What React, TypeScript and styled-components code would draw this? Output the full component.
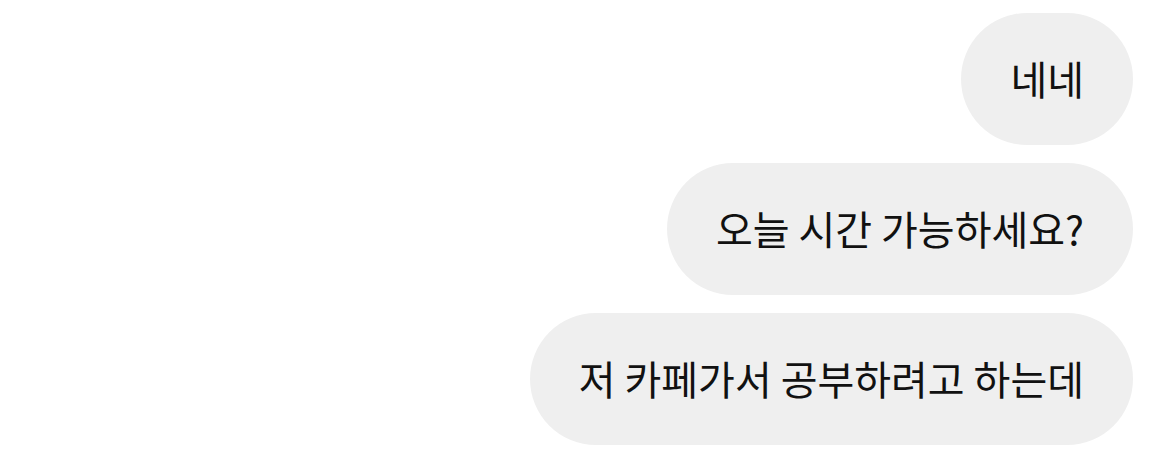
import React from 'react';
import styled, { createGlobalStyle } from 'styled-components';

const GlobalStyle = createGlobalStyle`
  html, body {
    margin: 0;
    padding: 0;
    background: #ffffff;
  }
  body {
    font-family: "Noto Sans CJK KR", "Noto Sans", sans-serif;
  }
`;

const Thread = styled.div`
  display: flex;
  flex-direction: column;
  align-items: flex-end;
  gap: 18px;
  padding: 13px 37px 0 0;
`;

const Bubble = styled.div`
  display: flex;
  align-items: center;
  height: 132px;
  padding: 0 49px 2px 49px;
  box-sizing: border-box;
  border-radius: 66px;
  background: #efefef;
  color: #111111;
  font-size: 40px;
  white-space: nowrap;
`;

const messages = ['네네', '오늘 시간 가능하세요?', '저 카페가서 공부하려고 하는데'];

const App: React.FC = () => (
  <>
    <GlobalStyle />
    <Thread>
      {messages.map((m) => (
        <Bubble key={m}>{m}</Bubble>
      ))}
    </Thread>
  </>
);

export default App;
